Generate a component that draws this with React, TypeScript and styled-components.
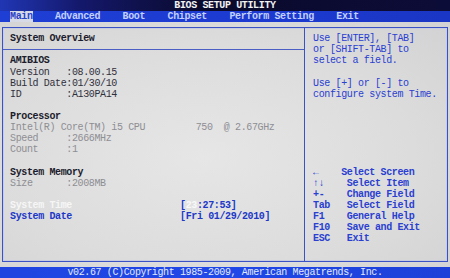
import styled, { createGlobalStyle } from 'styled-components';

const ROW = 11.12;
const CHAR = 5.625;

const GlobalStyle = createGlobalStyle`
  html, body {
    margin: 0;
    padding: 0;
    background: #d9d9d9;
  }
  body {
    font-family: 'Liberation Mono', 'DejaVu Sans Mono', monospace;
  }
`;

const Screen = styled.div`
  width: 450px;
  height: 278px;
  display: flex;
  flex-direction: column;
  overflow: hidden;
  font-size: 10px;
  letter-spacing: ${CHAR - 6}px;
  line-height: ${ROW}px;
  font-weight: 700;
`;

const TitleBar = styled.div`
  height: ${ROW}px;
  display: flex;
  justify-content: center;
  align-items: center;
  background: linear-gradient(90deg, #2036b4 0%, #14186a 18%, #0a0a2c 45%, #0c0c38 100%);
  color: #f2f2f2;
`;

const MenuBar = styled.nav`
  height: ${ROW}px;
  display: flex;
  align-items: center;
  gap: ${CHAR * 4}px;
  padding-left: 10px;
  background: linear-gradient(90deg, #1f3fd4 0%, #1c3ad0 60%, #1a36c4 100%);
`;

const MenuItem = styled.span<{ $active?: boolean }>`
  white-space: pre;
  color: ${p => (p.$active ? '#2a44c8' : '#c2d0ff')};
  background: ${p => (p.$active ? '#d6dae6' : 'transparent')};
`;

const Body = styled.div`
  height: ${ROW * 22}px;
  box-sizing: border-box;
  padding: 5px 2px 5px 2px;
  background: radial-gradient(ellipse at 45% 55%, #e6e6e6 0%, #dcdcdc 60%, #d2d2d4 100%);
`;

const Frame = styled.div`
  height: 100%;
  box-sizing: border-box;
  border: 1px solid #3a52c4;
  box-shadow: inset 0 0 0 1px #c8cce0;
  display: grid;
  grid-template-columns: 302px 1fr;
  padding-top: 5px;
`;

const LeftPanel = styled.section`
  border-right: 1px solid #3a52c4;
  margin-top: -5px;
  padding-top: 5px;
`;

const RightPanel = styled.section`
  padding-left: 8px;
  display: flex;
  flex-direction: column;
`;

const Row = styled.div<{ $tone?: 'head' | 'value' | 'dim' | 'select' | 'blue' }>`
  height: ${ROW}px;
  padding-left: 7px;
  white-space: pre;
  font-weight: ${p => (p.$tone === 'dim' || p.$tone === 'value' ? 400 : 700)};
  color: ${p =>
    p.$tone === 'head'
      ? '#1c1c2c'
      : p.$tone === 'value'
      ? '#30303c'
      : p.$tone === 'dim'
      ? '#8e8e94'
      : p.$tone === 'select'
      ? '#f6f6f6'
      : p.$tone === 'blue'
      ? '#2038c8'
      : '#30303c'};
`;

const Spacer = styled.div<{ $rows?: number }>`
  height: ${p => ROW * (p.$rows ?? 1)}px;
`;

const Divider = styled.div`
  height: ${ROW}px;
  display: flex;
  align-items: center;

  &::after {
    content: '';
    flex: 1;
    height: 1px;
    background: #4a5ec4;
  }
`;

const FieldRow = styled.div`
  height: ${ROW}px;
  display: grid;
  grid-template-columns: 170px 1fr;
  padding-left: 7px;
  white-space: pre;
`;

const FieldLabel = styled.span<{ $selected?: boolean }>`
  color: ${p => (p.$selected ? '#f6f6f6' : '#2038c8')};
`;

const FieldValue = styled.span`
  color: #2038c8;
`;

const Hi = styled.span`
  color: #f8f8f8;
`;

const Help = styled.div`
  height: ${ROW}px;
  white-space: pre;
  color: #2a40d0;
  font-weight: 400;
`;

const KeyRow = styled.div`
  height: ${ROW}px;
  display: grid;
  grid-template-columns: ${CHAR * 6}px 1fr;
  white-space: pre;
  color: #2a40d0;
`;

const KeyDesc = styled.span<{ $shift?: boolean }>`
  margin-left: ${p => (p.$shift ? -CHAR : 0)}px;
`;

const Footer = styled.footer`
  height: ${ROW}px;
  display: flex;
  justify-content: center;
  align-items: center;
  background: linear-gradient(90deg, #1f44e0 0%, #2048e8 50%, #1c40d8 100%);
  color: #e2eaff;
  font-weight: 400;
  white-space: pre;
`;

const menu = ['Main', 'Advanced', 'Boot', 'Chipset', 'Perform Setting', 'Exit'];

const keys: [string, string][] = [
  ['\u2190', 'Select Screen'],
  ['\u2191\u2193', 'Select Item'],
  ['+-', 'Change Field'],
  ['Tab', 'Select Field'],
  ['F1', 'General Help'],
  ['F10', 'Save and Exit'],
  ['ESC', 'Exit'],
];

export default function App() {
  return (
    <>
      <GlobalStyle />
      <Screen>
        <TitleBar>BIOS SETUP UTILITY</TitleBar>
        <MenuBar>
          {menu.map((m, i) => (
            <MenuItem key={m} $active={i === 0}>
              {m}
            </MenuItem>
          ))}
        </MenuBar>
        <Body>
          <Frame>
            <LeftPanel>
              <Row $tone="head">System Overview</Row>
              <Divider />
              <Row $tone="head">AMIBIOS</Row>
              <Row $tone="value">Version   :08.00.15</Row>
              <Row $tone="value">Build Date:01/30/10</Row>
              <Row $tone="value">ID        :A130PA14</Row>
              <Spacer />
              <Row $tone="head">Processor</Row>
              <Row $tone="dim">Intel(R) Core(TM) i5 CPU         750  @ 2.67GHz</Row>
              <Row $tone="dim">Speed     :2666MHz</Row>
              <Row $tone="dim">Count     :1</Row>
              <Spacer />
              <Row $tone="head">System Memory</Row>
              <Row $tone="dim">Size      :2008MB</Row>
              <Spacer />
              <FieldRow>
                <FieldLabel $selected>System Time</FieldLabel>
                <FieldValue>
                  [<Hi>23</Hi>:27:53]
                </FieldValue>
              </FieldRow>
              <FieldRow>
                <FieldLabel>System Date</FieldLabel>
                <FieldValue>[Fri 01/29/2010]</FieldValue>
              </FieldRow>
            </LeftPanel>
            <RightPanel>
              <Help>Use [ENTER], [TAB]</Help>
              <Help>or [SHIFT-TAB] to</Help>
              <Help>select a field.</Help>
              <Spacer />
              <Help>Use [+] or [-] to</Help>
              <Help>configure system Time.</Help>
              <Spacer $rows={6} />
              {keys.map(([k, d], i) => (
                <KeyRow key={k}>
                  <span>{k}</span>
                  <KeyDesc $shift={i === 0}>{d}</KeyDesc>
                </KeyRow>
              ))}
            </RightPanel>
          </Frame>
        </Body>
        <Footer>v02.67 (C)Copyright 1985-2009, American Megatrends, Inc.</Footer>
      </Screen>
    </>
  );
}
